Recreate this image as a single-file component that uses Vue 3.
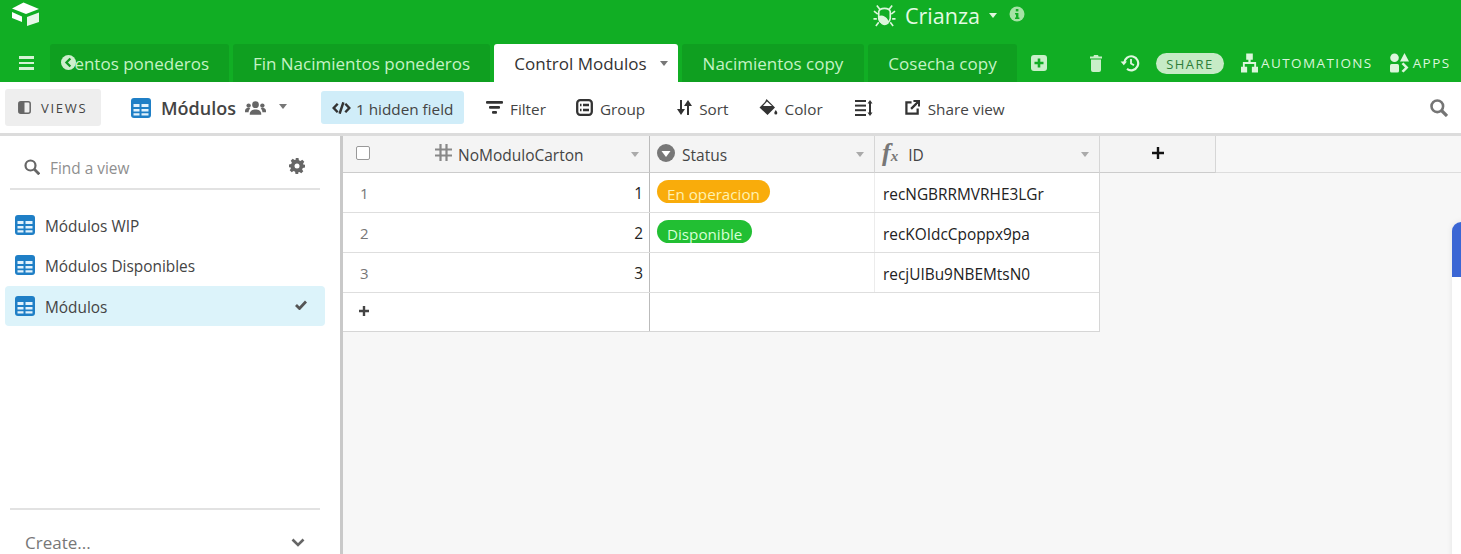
<script setup>
const tabs = [
  { label: 'Fin Nacimientos ponederos', width: 257 },
]
const views = [
  { name: 'Módulos WIP', active: false },
  { name: 'Módulos Disponibles', active: false },
  { name: 'Módulos', active: true },
]
const rows = [
  { n: 1, status: 'En operacion', tone: 'amber', id: 'recNGBRRMVRHE3LGr' },
  { n: 2, status: 'Disponible', tone: 'green', id: 'recKOIdcCpoppx9pa' },
  { n: 3, status: '', tone: '', id: 'recjUIBu9NBEMtsN0' },
]
</script>

<template>
  <div class="page">
    <header class="top">
      <div class="title-row">
        <svg class="logo" viewBox="0 0 30 28" width="30" height="28">
          <path d="M13.500 2.500 29 9 16 14 2 8.500Z" fill="#fff" />
          <path d="M2 12 12 16.500V22L2 18Z" fill="#fff" />
          <path d="M17 17 29 12.500V22L17 26Z" fill="#fff" opacity=".9" />
        </svg>
        <div class="base-name">
          <svg class="bug" viewBox="0 0 24 24" width="23" height="23" fill="none" stroke="#dcf7dc" stroke-width="1.700">
            <path d="M7.500 6 4 1.500M16.500 6 20 1.500M5 10.500 1 7.500M19 10.500l4-3M4 15.500H0.500M20 15.500h3.500M6 19l-3 4M18 19l3 4" />
            <path d="M6 8c1-4.500 11-4.500 12 0v7c-1 6.500-11 6.500-12 0Z" />
            <path d="M6 13.500c3.500-2 9.500 1 9.500 6.500-4 3-8.500 0-9.500-6.500Z" fill="#dcf7dc" />
          </svg>
          <span class="crianza">Crianza</span>
          <span class="caret light"></span>
          <svg class="info" viewBox="0 0 16 16" width="16" height="16">
            <circle cx="8" cy="8" r="7.500" fill="#a5e3a5" />
            <rect x="6.800" y="3" width="2.600" height="2.400" fill="#11ae24" />
            <path d="M6 7h3.400v4.600h1v1.400H6v-1.400h1V8.400H6Z" fill="#11ae24" />
          </svg>
        </div>
      </div>
      <div class="tab-row">
        <button class="hamburger" aria-label="menu">
          <span></span><span></span><span></span>
        </button>
        <div class="tab tab-clipped">
          <span>entos ponederos</span>
          <svg class="back" viewBox="0 0 16 16" width="15" height="15">
            <circle cx="8" cy="8" r="8" fill="#cdeecd" />
            <path d="M10 3.800 5.800 8l4.200 4.200" fill="none" stroke="#0f9a20" stroke-width="2.400" />
          </svg>
        </div>
        <div v-for="t in tabs" :key="t.label" class="tab" :style="{ width: t.width + 'px' }">{{ t.label }}</div>
        <div class="tab active">Control Modulos<span class="caret grey tab-caret"></span></div>
        <div class="tab w182">Nacimientos copy</div>
        <div class="tab w149">Cosecha copy</div>
        <svg class="add-tab" viewBox="0 0 16 16" width="16" height="16">
          <rect width="16" height="16" rx="3" fill="#c9efc9" />
          <path d="M8 3.500v9M3.500 8h9" stroke="#11ae24" stroke-width="2.600" />
        </svg>
        <div class="tab-actions">
          <svg class="trash" viewBox="0 0 12 17" width="12" height="17">
            <path d="M4 0h4l.6 1.500H12V3.400H0V1.500h3.400Z M1 4.500h10V15a2 2 0 0 1-2 2H3a2 2 0 0 1-2-2Z" fill="#c9efc9" />
          </svg>
          <svg class="history" viewBox="0 0 20 18" width="20" height="18" fill="none" stroke="#dff7df" stroke-width="2.200">
            <path d="M4.200 8.800A7 7 0 1 1 7 14.900" />
            <path d="M.6 7.400h6.400L3.800 11.300Z" fill="#dff7df" stroke="none" />
            <path d="M11 5v4.500l3 1.800" stroke-width="1.800" />
          </svg>
          <span class="share">SHARE</span>
          <span class="auto">
            <svg viewBox="0 0 18 20" width="17" height="20">
              <path d="M5.500 0h7v6.500h-2.300V9H16v5h2v6h-6.500v-6h2.500v-3H4v3h2.500v6H0v-6h2V9h5.800V6.500H5.500Z" fill="#dcf6dc" />
            </svg>
            <span>AUTOMATIONS</span>
          </span>
          <span class="apps">
            <svg viewBox="0 0 19 20" width="19" height="20" fill="#dcf6dc">
              <circle cx="4.500" cy="4.800" r="4.300" />
              <path d="M14.500 0 19 8.600H10Z" />
              <rect x="0" y="11" width="9" height="8.500" rx="1.500" />
              <path d="m11.500 11 2-1.500 5 5-5 5-2-1.500 3.500-3.500Z" />
            </svg>
            <span>APPS</span>
          </span>
        </div>
      </div>
    </header>

    <div class="toolbar">
      <button class="views-btn">
        <svg viewBox="0 0 13 13" width="13" height="13">
          <rect x=".8" y=".8" width="11.400" height="11.400" rx="2" fill="none" stroke="#666" stroke-width="1.500" />
          <rect x="1" y="1" width="5.500" height="11" fill="#666" />
        </svg>
        <span>VIEWS</span>
      </button>
      <div class="view-name">
        <svg viewBox="0 0 20 20" width="20" height="20">
          <rect width="20" height="20" rx="3" fill="#1f7fc6" />
          <path d="M2.500 6h6v3h-6ZM10.500 6h7v3h-7ZM2.500 11h6v2.500h-6ZM10.500 11h7v2.500h-7ZM2.500 15.300h6v2.200h-6ZM10.500 15.300h7v2.200h-7Z" fill="#e2f2fc" />
        </svg>
        <strong>Módulos</strong>
        <svg viewBox="0 0 22 16" width="21" height="16" fill="#666">
          <circle cx="11" cy="4.500" r="3.500" /><path d="M5 14c0-6 12-6 12 0v1H5Z" />
          <circle cx="3.800" cy="5.500" r="2.300" /><circle cx="18.200" cy="5.500" r="2.300" />
          <path d="M0 11c0-3 4-4 5.500-2.500C4 10 3.800 11 3.800 12.500H0ZM22 11c0-3-4-4-5.500-2.500 1.500 1.500 1.700 2.500 1.700 4H22Z" />
        </svg>
        <span class="caret grey view-caret"></span>
      </div>
      <button class="hidden-btn">
        <svg viewBox="0 0 20 12" width="19" height="12" fill="none" stroke="#333" stroke-width="2.600">
          <path d="M6 1.500 1.800 6 6 10.500M14 1.500 18.200 6 14 10.500M12 0 8 12" />
        </svg>
        <span>1 hidden field</span>
      </button>
      <div class="tool filter">
        <svg viewBox="0 0 17 13" width="17" height="13" fill="#333"><rect width="17" height="2.800" rx="1" /><rect x="3" y="5" width="11" height="2.800" rx="1" /><rect x="6" y="10" width="5" height="2.800" rx="1" /></svg>
        <span>Filter</span>
      </div>
      <div class="tool group">
        <svg viewBox="0 0 17 17" width="17" height="17" fill="none" stroke="#333" stroke-width="2.300"><rect x="1.200" y="1.200" width="14.600" height="14.600" rx="3" /><path d="M4 6h1.500M7 6h6M4 11h1.500M7 11h6" /></svg>
        <span>Group</span>
      </div>
      <div class="tool sort">
        <svg viewBox="0 0 15 15" width="15" height="15" fill="#333"><path d="M3 0h2v9h3l-4 6-4-6h3ZM10 15h2V6h3l-4-6-4 6h3Z" /></svg>
        <span>Sort</span>
      </div>
      <div class="tool color">
        <svg viewBox="0 0 19 17" width="19" height="17" fill="#333"><path d="M7.500 0 9 1.500 16 8.500 8.500 16 .5 8.500 6 3Z" /><path d="M16.800 11c1 1.500 1.500 2.300 1.500 3.100a1.500 1.500 0 0 1-3 0c0-.8.500-1.600 1.500-3.100Z" /><path d="M4 7h9L8 2.500Z" fill="#fff" /></svg>
        <span>Color</span>
      </div>
      <svg class="density" viewBox="0 0 18 16" width="18" height="16" fill="#333">
        <rect width="11" height="2" /><rect y="4.600" width="11" height="2" /><rect y="9.200" width="11" height="2" /><rect y="14" width="11" height="2" />
        <rect x="14" y="2" width="2" height="12" />
        <path d="M12.500 3.500 15 0l2.500 3.500Z" /><path d="M12.500 12.500h5L15 16Z" />
      </svg>
      <div class="tool share-view">
        <svg viewBox="0 0 16 16" width="15" height="15" fill="none" stroke="#333" stroke-width="2.400"><path d="M7 2.500H1.500v12h12V9" /><path d="M6.500 9.500 14 2M9 1h6v6" /></svg>
        <span>Share view</span>
      </div>
      <svg class="search-main" viewBox="0 0 18 18" width="18" height="18" fill="none" stroke="#757575" stroke-width="2.600">
        <circle cx="7.300" cy="7.300" r="5.800" /><path d="m11.500 11.500 5.500 5.500" stroke-width="3.200" />
      </svg>
    </div>

    <div class="body">
      <aside class="side">
        <div class="finder">
          <svg viewBox="0 0 16 16" width="16" height="16" fill="none" stroke="#666" stroke-width="2.200">
            <circle cx="6.500" cy="6.500" r="5" /><path d="m10.300 10.300 5 5" stroke-width="2.800" />
          </svg>
          <span class="find-text">Find a view</span>
          <svg class="gear" viewBox="0 0 16 16" width="16" height="16">
            <path d="M6.500 0h3l.4 2.200 1.500.7L13.300 1.700l2 2-1.200 1.900.7 1.500L16 6.500v3l-2.200.4-.7 1.500 1.200 1.900-2 2-1.900-1.200-1.500.7L9.500 16h-3l-.4-2.200-1.500-.7-1.900 1.200-2-2 1.200-1.900-.7-1.500L0 9.500v-3l2.200-.4.700-1.500L1.700 2.700l2-2 1.900 1.200 1.500-.7Z" fill="#666" />
            <circle cx="8" cy="8" r="2.500" fill="#fff" />
          </svg>
        </div>
        <ul class="view-list">
          <li v-for="v in views" :key="v.name" :class="{ on: v.active }">
            <svg viewBox="0 0 20 20" width="20" height="20">
              <rect width="20" height="20" rx="3" fill="#1f7fc6" />
              <path d="M2.500 6h6v3h-6ZM10.500 6h7v3h-7ZM2.500 11h6v2.500h-6ZM10.500 11h7v2.500h-7ZM2.500 15.300h6v2.200h-6ZM10.500 15.300h7v2.200h-7Z" fill="#e2f2fc" />
            </svg>
            <span>{{ v.name }}</span>
            <svg v-if="v.active" class="check" viewBox="0 0 12 10" width="12" height="10">
              <path d="M1 5l3.500 3.500L11 1.500" fill="none" stroke="#555" stroke-width="2.800" />
            </svg>
          </li>
        </ul>
        <div class="create">
          <span>Create...</span>
          <svg viewBox="0 0 14 9" width="14" height="9"><path d="M1.500 1.500 7 7l5.500-5.500" fill="none" stroke="#666" stroke-width="2.600" /></svg>
        </div>
      </aside>

      <main class="grid-area">
        <div class="head">
          <div class="h-cell h-primary">
            <span class="checkbox"></span>
            <svg class="hash" viewBox="0 0 17 17" width="17" height="17" fill="none" stroke="#888" stroke-width="2.200">
              <path d="M5.500 0v17M11.500 0v17M0 5.500h17M0 11.500h17" />
            </svg>
            <span class="h-label">NoModuloCarton</span>
            <span class="caret pale"></span>
          </div>
          <div class="h-cell h-status">
            <svg viewBox="0 0 18 18" width="18" height="18">
              <circle cx="9" cy="9" r="9" fill="#777" />
              <path d="M4.500 7h9L9 13Z" fill="#fff" />
            </svg>
            <span class="h-label">Status</span>
            <span class="caret pale"></span>
          </div>
          <div class="h-cell h-id">
            <span class="fx">f<small>x</small></span>
            <span class="h-label">ID</span>
            <span class="caret pale"></span>
          </div>
          <div class="h-add">
            <svg viewBox="0 0 12 12" width="12" height="12"><path d="M6 0v12M0 6h12" stroke="#111" stroke-width="2.400" /></svg>
          </div>
        </div>
        <div class="table">
          <div v-for="r in rows" :key="r.n" class="row">
            <div class="c-primary">
              <span class="row-num">{{ r.n }}</span>
              <span class="row-value">{{ r.n }}</span>
            </div>
            <div class="c-status">
              <span v-if="r.status" class="pill" :class="r.tone">{{ r.status }}</span>
            </div>
            <div class="c-id">{{ r.id }}</div>
          </div>
          <div class="row-add">
            <div class="add-cell">
              <svg viewBox="0 0 10 10" width="10" height="10"><path d="M5 0v10M0 5h10" stroke="#444" stroke-width="2.400" /></svg>
            </div>
            <div class="add-rest"></div>
          </div>
        </div>
        <div class="float-panel"><div class="float-head"></div></div>
      </main>
    </div>
  </div>
</template>

<style>
html, body { margin: 0; background: #fff; overflow: hidden; }
</style>

<style scoped>
.page {
  width: 1461px;
  height: 554px;
  overflow: hidden;
  display: flex;
  flex-direction: column;
  font-family: "Open Sans", "Noto Sans", sans-serif;
  color: #333;
  background: #fff;
}
.top { background: #11ae24; height: 82px; flex: none; }
.title-row { height: 44px; position: relative; }
.logo { position: absolute; left: 10px; top: 0; }
.base-name {
  position: absolute;
  left: 873px;
  top: 2px;
  display: flex;
  align-items: center;
  height: 26px;
}
.crianza { font-size: 21.500px; color: #e4fbe4; margin-left: 9px; }
.caret { display: inline-block; width: 0; height: 0; border-left: 4.500px solid transparent; border-right: 4.500px solid transparent; border-top: 5px solid #888; }
.caret.light { border-top-color: #dff7df; margin-left: 9px; border-left-width: 4px; border-right-width: 4px; }
.caret.grey { border-top-color: #777; }
.caret.pale { border-top-color: #aaa; margin-left: auto; }
.info { margin-left: 12px; margin-top: -2px; }
.tab-row { height: 38px; display: flex; align-items: flex-end; position: relative; }
.hamburger {
  width: 50px;
  height: 38px;
  padding: 0 0 0 19px;
  background: none;
  border: none;
  display: flex;
  flex-direction: column;
  justify-content: center;
  gap: 3px;
  flex: none;
}
.hamburger span { display: block; width: 15px; height: 2.500px; background: #d5f3d5; }
.tab {
  height: 38px;
  box-sizing: border-box;
  background: #0f9f20;
  color: #c5f3c5;
  font-size: 17px;
  line-height: 39px;
  border-radius: 3px 3px 0 0;
  margin-right: 4px;
  text-align: center;
  white-space: nowrap;
  flex: none;
}
.tab-clipped { width: 179px; position: relative; text-align: right; padding-right: 20px; }
.back { position: absolute; left: 11px; top: 11px; }
.tab.active {
  width: 184px;
  background: #fff;
  color: #333;
  position: relative;
  padding-right: 11px;
}
.tab-caret { position: absolute; right: 10px; top: 17px; border-top-color: #aaa; }
.w182 { width: 182px; }
.w149 { width: 149px; }
.add-tab { margin: 0 0 11px 10px; flex: none; }
.tab-actions { position: relative; flex: 1; height: 38px; display: flex; align-items: center; }
.trash { margin-left: 43px; }
.history { margin-left: 18px; }
.share {
  margin-left: 16px;
  width: 68px;
  height: 21px;
  line-height: 22px;
  border-radius: 11px;
  background: #c6ebc6;
  color: #2f7d3a;
  font-size: 13px;
  letter-spacing: 1.500px;
  text-align: center;
}
.auto, .apps { display: flex; align-items: center; color: #dcf6dc; font-size: 13.500px; letter-spacing: 1.400px; }
.auto { margin-left: 17px; gap: 3px; }
.apps { margin-left: 17px; gap: 4px; }

.toolbar {
  height: 51px;
  flex: none;
  box-sizing: border-box;
  display: flex;
  align-items: center;
  position: relative;
  font-size: 15.300px;
  color: #444;
}
.views-btn {
  margin-left: 5px;
  width: 96px;
  height: 37px;
  background: #eee;
  border: none;
  border-radius: 3px;
  display: flex;
  align-items: center;
  gap: 10px;
  padding: 0 0 0 13px;
  font: inherit;
  font-size: 13px;
  letter-spacing: 1.700px;
  color: #444;
  flex: none;
}
.view-name { display: flex; align-items: center; margin-left: 30px; flex: none; }
.view-name strong { font-size: 18px; font-weight: 600; margin-left: 10px; color: #444; }
.view-name strong + svg { margin-left: 9px; }
.view-caret { margin-left: 13px; margin-top: -2px; }
.hidden-btn {
  margin-left: 34px;
  width: 143px;
  height: 33px;
  background: #d0edf9;
  border: none;
  border-radius: 3px;
  display: flex;
  align-items: center;
  gap: 5px;
  padding: 0 0 0 11px;
  font: inherit;
  color: #444;
  flex: none;
}
.hidden-btn span, .tool span { margin-top: 2px; }
.tool { display: flex; align-items: center; gap: 7px; flex: none; }
.filter { margin-left: 22px; }
.group { margin-left: 30px; }
.sort { margin-left: 32px; }
.color { margin-left: 30px; }
.density { margin-left: 32px; flex: none; }
.share-view { margin-left: 32px; gap: 8px; }
.search-main { position: absolute; right: 13px; top: 17px; }

.body { flex: 1; display: flex; min-height: 0; border-top: 3px solid #dcdcdc; }
.side {
  width: 343px;
  flex: none;
  box-sizing: border-box;
  border-right: 3px solid #c9c9c9;
  display: flex;
  flex-direction: column;
  padding: 0 15px 0 5px;
  position: relative;
}
.finder {
  margin: 0 5px;
  height: 54px;
  border-bottom: 2px solid #e2e2e2;
  display: flex;
  align-items: center;
  padding: 9px 15px 0 14px;
  box-sizing: border-box;
  flex: none;
}
.find-text { color: #8f8f8f; font-size: 15.400px; margin-left: 10px; margin-top: 4px; }
.gear { margin-left: auto; margin-top: -1px; }
.view-list { list-style: none; margin: 15px 0 0; padding: 0; flex: 1; }
.view-list li {
  height: 40px;
  display: flex;
  align-items: center;
  padding: 0 18px 0 10px;
  font-size: 15.400px;
  color: #444;
  border-radius: 4px;
  gap: 10px;
}
.view-list li span { margin-top: 3px; }
.view-list li.on { background: #dcf3fa; margin-top: 1px; }
.check { margin-left: auto; margin-top: -2px; }
.create {
  margin: 0 5px -12px;
  height: 58px;
  border-top: 2px solid #e2e2e2;
  display: flex;
  align-items: center;
  justify-content: space-between;
  padding: 8px 15px 0 15px;
  box-sizing: border-box;
  color: #777;
  font-size: 17px;
  flex: none;
}
.grid-area { flex: 1; background: #f7f7f7; position: relative; min-width: 0; }
.head { display: flex; height: 37px; box-sizing: border-box; }
.h-cell {
  background: #f4f4f4;
  box-sizing: border-box;
  border-right: 1px solid #d6d6d6;
  border-bottom: 1px solid #ccc;
  display: flex;
  align-items: center;
  padding-right: 10px;
  font-size: 15.500px;
  color: #444;
  flex: none;
}
.h-label { margin-top: 1px; }
.h-primary { width: 307px; border-right-color: #bbb; }
.checkbox { width: 12px; height: 12px; border: 1px solid #999; border-radius: 2px; background: #fff; margin-left: 13px; margin-top: -3px; flex: none; }
.hash { margin-left: 65px; margin-top: -3px; }
.h-primary .h-label { margin-left: 6px; }
.h-status { width: 225px; padding-left: 7px; }
.h-status .h-label { margin-left: 7px; }
.h-status svg { margin-top: -3px; }
.h-id { width: 225px; padding-left: 7px; }
.h-id .h-label { margin-left: 10px; }
.fx { font-family: "Liberation Serif", serif; font-style: italic; font-weight: 700; font-size: 26px; color: #777; line-height: 1; margin-top: -3px; }
.fx small { font-size: 15px; }
.h-add {
  width: 116px;
  box-sizing: border-box;
  background: #f4f4f4;
  border-right: 1px solid #d6d6d6;
  border-bottom: 1px solid #ccc;
  display: flex;
  align-items: center;
  justify-content: center;
  padding-bottom: 3px;
  flex: none;
}
.head::after { content: ""; flex: 1; border-bottom: 1px solid #ddd; }
.table { width: 757px; background: #fff; box-sizing: border-box; border-right: 1px solid #d6d6d6; border-bottom: 1px solid #d6d6d6; }
.row { display: flex; height: 40px; box-sizing: border-box; border-bottom: 1px solid #dedede; font-size: 15.400px; color: #222; }
.c-primary {
  width: 307px;
  flex: none;
  box-sizing: border-box;
  border-right: 1px solid #bbb;
  display: flex;
  justify-content: space-between;
  align-items: center;
  padding: 1px 6px 0 17px;
}
.row-num { color: #777; font-size: 15px; }
.c-status { width: 225px; flex: none; box-sizing: border-box; border-right: 1px solid #ececec; padding: 7px 0 0 7px; }
.pill {
  display: inline-block;
  height: 23px;
  line-height: 29px;
  border-radius: 12px;
  padding: 0 10px;
  font-size: 15.200px;
  overflow: hidden;
  vertical-align: top;
}
.amber { background: #f9ac0b; color: #fff2b0; }
.green { background: #22bf33; color: #d6ffd6; }
.c-id { flex: 1; padding: 2px 0 0 8px; line-height: 39px; height: 39px; box-sizing: border-box; }
.row-add { display: flex; height: 38px; }
.add-cell { width: 307px; flex: none; box-sizing: border-box; border-right: 1px solid #bbb; padding: 13px 0 0 16px; }
.add-cell svg { display: block; }
.add-rest { flex: 1; }
.float-panel {
  position: absolute;
  left: 1109px;
  top: 86px;
  width: 40px;
  height: 400px;
  background: #fff;
  border-radius: 9px 0 0 0;
  box-shadow: 0 0 6px rgba(0, 0, 0, 0.08);
  overflow: hidden;
}
.float-head { height: 55px; background: #3b66d4; }
</style>
